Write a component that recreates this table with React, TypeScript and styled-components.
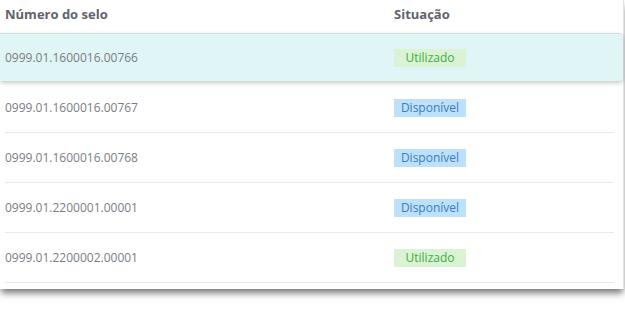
import React from "react";
import styled, { createGlobalStyle } from "styled-components";

type Status = "Utilizado" | "Disponível";

interface Seal {
  number: string;
  status: Status;
}

const seals: Seal[] = [
  { number: "0999.01.1600016.00766", status: "Utilizado" },
  { number: "0999.01.1600016.00767", status: "Disponível" },
  { number: "0999.01.1600016.00768", status: "Disponível" },
  { number: "0999.01.2200001.00001", status: "Disponível" },
  { number: "0999.01.2200002.00001", status: "Utilizado" },
];

const GlobalStyle = createGlobalStyle`
  html, body {
    margin: 0;
    padding: 0;
    background: #ffffff;
    font-family: "Open Sans", "Liberation Sans", sans-serif;
  }
`;

const Page = styled.div`
  padding-bottom: 40px;
`;

const Card = styled.div`
  position: relative;
  width: 624px;
  padding: 0 9px 6px 5px;
  box-sizing: border-box;
  background: #ffffff;
  border-right: 1px solid #e2e2e2;
  box-shadow: 0 5px 7px -1px rgba(0, 0, 0, 0.55);
`;

const HeaderRow = styled.div`
  display: grid;
  grid-template-columns: 389px 1fr;
  align-items: center;
  height: 33px;
  padding-bottom: 6px;
  box-sizing: border-box;
  font-size: 13px;
  font-weight: 700;
  color: #60646b;
`;

const Row = styled.div<{ $active?: boolean }>`
  display: grid;
  grid-template-columns: 389px 1fr;
  align-items: center;
  font-size: 12px;
  color: #7a7d82;
  box-sizing: border-box;
  ${(p) =>
    p.$active
      ? `
    height: 48px;
    margin: 0 -9px 2px -5px;
    padding-left: 5px;
    background: #e0f5f5;
    border-top: 1px solid #d6dcdc;
    border-radius: 0 4px 4px 0;
    box-shadow: 0 2px 4px rgba(0, 0, 0, 0.22);
  `
      : `
    height: 50px;
    border-bottom: 1px solid #e8e8ee;
  `}
`;

const Badge = styled.span<{ $status: Status }>`
  display: inline-flex;
  align-items: center;
  justify-content: center;
  width: 72px;
  height: 18px;
  font-size: 12px;
  background: ${(p) => (p.$status === "Utilizado" ? "#d9f3d4" : "#bde0fb")};
  color: ${(p) => (p.$status === "Utilizado" ? "#3fae3f" : "#3a7cc0")};
`;

const Cell = styled.div`
  display: flex;
  align-items: center;
`;

export default function App() {
  return (
    <Page>
      <GlobalStyle />
      <Card>
        <HeaderRow>
          <span>Número do selo</span>
          <span>Situação</span>
        </HeaderRow>
        {seals.map((seal, i) => (
          <Row key={seal.number} $active={i === 0}>
            <Cell>{seal.number}</Cell>
            <Cell>
              <Badge $status={seal.status}>{seal.status}</Badge>
            </Cell>
          </Row>
        ))}
      </Card>
    </Page>
  );
}
